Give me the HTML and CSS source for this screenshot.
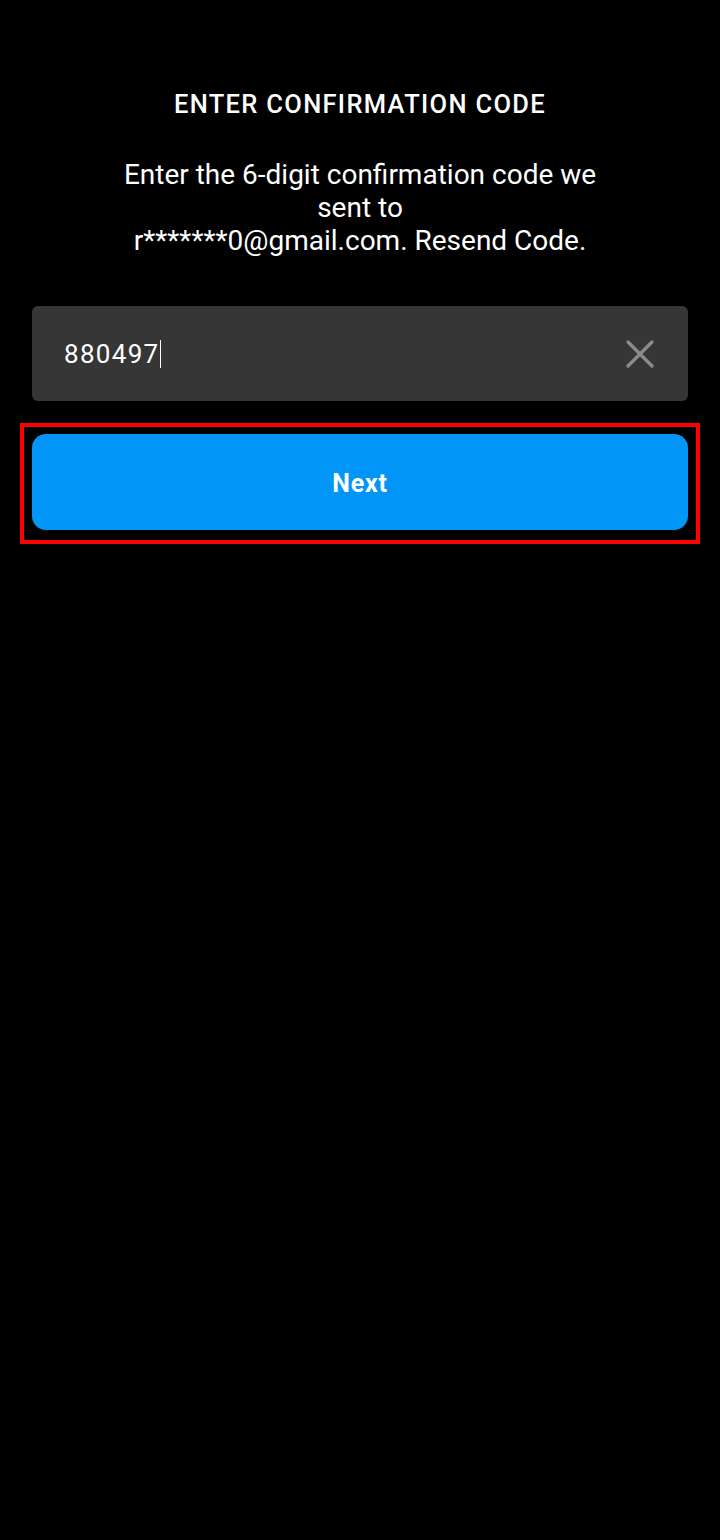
FILE: index.html
```html
<!DOCTYPE html>
<html lang="en">
<head>
<meta charset="UTF-8">
<meta name="viewport" content="width=device-width, initial-scale=1.0">
<title>Enter Confirmation Code</title>
<link rel="stylesheet" href="styles.css">
</head>
<body>

<div class="screen">
  <h2 class="title">ENTER CONFIRMATION CODE</h2>

  <p class="message">
    Enter the 6-digit confirmation code we<br>
    sent to<br>
    r*******0@gmail.com. Resend Code.
  </p>

  <div class="code-field">
    <span class="code-value">880497</span><span class="caret"></span>
    <svg class="clear-icon" width="28" height="28" viewBox="0 0 28 28">
      <path d="M2 2 L26 26 M26 2 L2 26" stroke="#8c8c8c" stroke-width="3.2" stroke-linecap="round" fill="none"/>
    </svg>
  </div>

  <!-- highlighted next button -->
  <div class="highlight">
    <a href="#" class="button">Next</a>
  </div>
</div>

</body>
</html>
```

FILE: styles.css
```css
/* General Styles */
body {
  font-family: Roboto, "Liberation Sans", sans-serif;
  margin: 0;
  padding: 0;
  background-color: #000;
  color: #fff;
}

.screen {
  width: 720px;
  height: 1540px;
  padding-top: 86px;
  box-sizing: border-box;
}

.title {
  margin: 0;
  font-size: 25.5px;
  font-weight: 500;
  letter-spacing: 1.3px;
  line-height: 36px;
  text-align: center;
}

.message {
  margin: 36px 0 0;
  font-size: 28px;
  line-height: 33px;
  text-align: center;
}

/* Code input */
.code-field {
  display: flex;
  align-items: center;
  margin: 49px 32px 0;
  height: 95px;
  padding: 0 34px 0 32px;
  background-color: #363636;
  border-radius: 6px;
}

.code-value {
  font-size: 26px;
  letter-spacing: 1.3px;
}

.caret {
  width: 1px;
  height: 28px;
  margin-left: 1px;
  background-color: #fff;
}

.clear-icon {
  margin-left: auto;
}

/* Button Styles */
.highlight {
  margin: 22px 20px 0;
  padding: 7px 8px 10px;
  border: 4px solid #ff0000;
}

.button {
  display: flex;
  align-items: center;
  justify-content: center;
  height: 96px;
  padding-top: 3px;
  box-sizing: border-box;
  background-color: #0095f6;
  color: #fff;
  font-size: 25px;
  font-weight: 700;
  letter-spacing: 0.8px;
  border-radius: 14px;
  text-decoration: none;
}
```
